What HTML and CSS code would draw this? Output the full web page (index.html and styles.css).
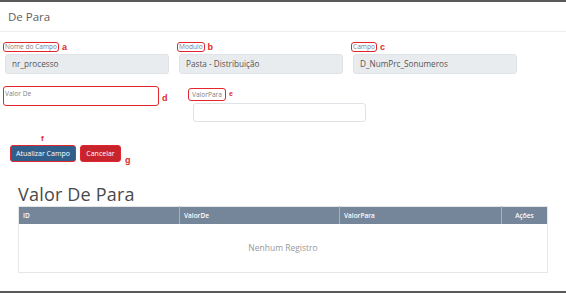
FILE: index.html
```html
<!DOCTYPE html>
<html>
    <head>
        <title>De Para</title>
        <link rel="stylesheet" href="styles.css">
    </head>
    <body>
        <div class="page">
            <div class="modal-header">De Para</div>

            <div class="row row-top">
                <div class="field">
                    <div class="label-line"><span class="label mark">Nome do Campo</span><span class="tag">a</span></div>
                    <div class="input readonly">nr_processo</div>
                </div>
                <div class="field">
                    <div class="label-line"><span class="label mark">Modulo</span><span class="tag">b</span></div>
                    <div class="input readonly">Pasta - Distribuição</div>
                </div>
                <div class="field">
                    <div class="label-line"><span class="label mark">Campo</span><span class="tag">c</span></div>
                    <div class="input readonly">D_NumPrc_Sonumeros</div>
                </div>
            </div>

            <div class="row row-values">
                <div class="field-de">
                    <span class="label mark big">Valor De</span><span class="tag tag-d">d</span>
                </div>
                <div class="field-para">
                    <div class="label-line tall"><span class="label mark">ValorPara</span><span class="tag tag-e">e</span></div>
                    <div class="input blank"></div>
                </div>
            </div>

            <div class="actions">
                <div class="btn-wrap">
                    <span class="tag tag-f">f</span>
                    <button class="btn btn-primary">Atualizar Campo</button>
                </div>
                <button class="btn btn-danger">Cancelar</button>
                <span class="tag tag-g">g</span>
            </div>

            <h2 class="section-title">Valor De Para</h2>
            <table class="grid">
                <thead>
                    <tr>
                        <th class="col-id">ID</th>
                        <th class="col-de">ValorDe</th>
                        <th class="col-para">ValorPara</th>
                        <th class="col-acoes">Ações</th>
                    </tr>
                </thead>
                <tbody>
                    <tr>
                        <td colspan="4" class="empty">Nenhum Registro</td>
                    </tr>
                </tbody>
            </table>
            <div class="bottom-bar"></div>
        </div>
    </body>
</html>
```

FILE: styles.css
```css
html, body {
    margin: 0;
    padding: 0;
    background: #fff;
}
body {
    width: 566px;
    height: 293px;
    overflow: hidden;
    font-family: "Open Sans", "Noto Sans", sans-serif;
    font-size: 8px;
    line-height: 1.2;
    color: #555;
}
.page {
    border-top: 2px solid #5a5a5a;
    height: 291px;
    position: relative;
}
.modal-header {
    height: 29px;
    line-height: 29px;
    padding-left: 8px;
    font-size: 11.5px;
    color: #606060;
    border-bottom: 1px solid #eceff1;
}
.row {
    display: flex;
}
.row-top {
    padding: 9px 0 0 5px;
    gap: 10px;
}
.field {
    width: 164px;
}
.label-line {
    display: flex;
    align-items: center;
    height: 11px;
}
.label {
    font-size: 6.6px;
    color: #808080;
    display: inline-block;
}
.mark {
    border: 1.5px solid #e3262e;
    border-radius: 3px;
    padding: 0 1px;
    height: 8px;
    line-height: 8px;
    margin-left: -2px;
}
.tag {
    color: #e3262e;
    font-weight: bold;
    font-size: 9px;
    line-height: 10px;
    font-family: "Liberation Sans", sans-serif;
    margin-left: 3px;
}
.input {
    margin-top: 2px;
    border: 1px solid #dfe3e8;
    border-radius: 3px;
    box-sizing: border-box;
    height: 20px;
    line-height: 18px;
    padding-left: 6px;
    font-size: 8.2px;
    color: #555;
}
.readonly {
    background: #e9ecef;
}
.row-values {
    padding: 12px 0 0 3px;
}
.field-de {
    width: 185px;
    display: flex;
    align-items: flex-start;
}
.big {
    width: 152px;
    height: 18px;
    line-height: 14px;
    margin-left: 0;
}
.tag-d {
    margin-top: 7px;
}
.field-para {
    width: 178px;
    padding-top: 1px;
}
.tall {
    height: 14px;
}
.field-para .mark {
    margin-left: 0;
    height: 11px;
    line-height: 11px;
    padding: 0 3px;
}
.tag-e {
    font-size: 7px;
}
.blank {
    margin-left: 5px;
    background: #fff;
    height: 19px;
    margin-top: 2px;
}
.actions {
    display: flex;
    align-items: flex-end;
    padding: 23px 0 0 10px;
    gap: 4px;
}
.btn-wrap {
    position: relative;
    display: flex;
}
.tag-f {
    position: absolute;
    left: 31px;
    top: -11px;
    margin: 0;
    font-size: 8px;
}
.btn {
    height: 17px;
    box-sizing: border-box;
    border: 1.5px solid #e3262e;
    border-radius: 3px;
    font-family: "Open Sans", "Noto Sans", sans-serif;
    font-size: 7px;
    line-height: 12px;
    color: #fff;
    padding: 0;
    white-space: nowrap;
}
.btn-primary {
    width: 66px;
    background: #2f5f8a;
}
.btn-danger {
    width: 41px;
    background: #c8242d;
}
.tag-g {
    margin-left: 0;
    margin-bottom: -3px;
}
.section-title {
    margin: 21px 0 0 18px;
    font-size: 18px;
    font-weight: normal;
    color: #4a4a4a;
    height: 23px;
    line-height: 22px;
    letter-spacing: 0.2px;
}
.grid {
    margin: 0 0 0 18px;
    width: 530px;
    border-collapse: collapse;
    border: 1px solid #e6e6e6;
}
.grid th {
    background: #76869a;
    color: #fff;
    font-size: 6.5px;
    font-weight: 600;
    text-align: left;
    height: 17px;
    padding: 0 0 0 4px;
    border-left: 1px solid #a6b2bf;
}
.grid th:first-child {
    border-left: none;
}
.col-id { width: 156px; }
.col-de { width: 155px; }
.col-para { width: 157px; }
.grid th.col-acoes {
    text-align: center;
    padding: 0;
}
.empty {
    height: 48px;
    text-align: center;
    font-size: 8.5px;
    color: #999;
    padding: 0;
}
.bottom-bar {
    position: absolute;
    left: 0;
    right: 0;
    bottom: 0;
    height: 2px;
    background: #5a5a5a;
}
```
